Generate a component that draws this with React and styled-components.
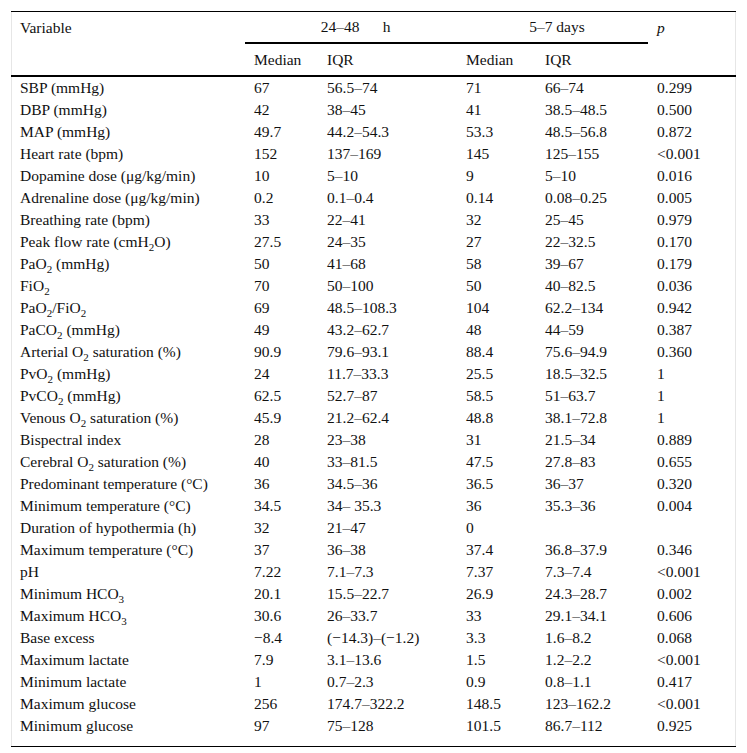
import React from 'react';
import styled, { createGlobalStyle } from 'styled-components';

const GlobalStyle = createGlobalStyle`
  html, body {
    margin: 0;
    padding: 0;
    background: #fff;
  }
`;

// "PaO_2" -> PaO<sub>2</sub>
const sub = (text) =>
  text.split(/(_\d)/).map((p, i) =>
    p.startsWith('_') ? <Sub key={i}>{p.slice(1)}</Sub> : <React.Fragment key={i}>{p}</React.Fragment>
  );

const rows = [
  ['SBP (mmHg)', '67', '56.5–74', '71', '66–74', '0.299'],
  ['DBP (mmHg)', '42', '38–45', '41', '38.5–48.5', '0.500'],
  ['MAP (mmHg)', '49.7', '44.2–54.3', '53.3', '48.5–56.8', '0.872'],
  ['Heart rate (bpm)', '152', '137–169', '145', '125–155', '<0.001'],
  ['Dopamine dose (μg/kg/min)', '10', '5–10', '9', '5–10', '0.016'],
  ['Adrenaline dose (μg/kg/min)', '0.2', '0.1–0.4', '0.14', '0.08–0.25', '0.005'],
  ['Breathing rate (bpm)', '33', '22–41', '32', '25–45', '0.979'],
  ['Peak flow rate (cmH_2O)', '27.5', '24–35', '27', '22–32.5', '0.170'],
  ['PaO_2 (mmHg)', '50', '41–68', '58', '39–67', '0.179'],
  ['FiO_2', '70', '50–100', '50', '40–82.5', '0.036'],
  ['PaO_2/FiO_2', '69', '48.5–108.3', '104', '62.2–134', '0.942'],
  ['PaCO_2 (mmHg)', '49', '43.2–62.7', '48', '44–59', '0.387'],
  ['Arterial O_2 saturation (%)', '90.9', '79.6–93.1', '88.4', '75.6–94.9', '0.360'],
  ['PvO_2 (mmHg)', '24', '11.7–33.3', '25.5', '18.5–32.5', '1'],
  ['PvCO_2 (mmHg)', '62.5', '52.7–87', '58.5', '51–63.7', '1'],
  ['Venous O_2 saturation (%)', '45.9', '21.2–62.4', '48.8', '38.1–72.8', '1'],
  ['Bispectral index', '28', '23–38', '31', '21.5–34', '0.889'],
  ['Cerebral O_2 saturation (%)', '40', '33–81.5', '47.5', '27.8–83', '0.655'],
  ['Predominant temperature (°C)', '36', '34.5–36', '36.5', '36–37', '0.320'],
  ['Minimum temperature (°C)', '34.5', '34– 35.3', '36', '35.3–36', '0.004'],
  ['Duration of hypothermia (h)', '32', '21–47', '0', '', ''],
  ['Maximum temperature (°C)', '37', '36–38', '37.4', '36.8–37.9', '0.346'],
  ['pH', '7.22', '7.1–7.3', '7.37', '7.3–7.4', '<0.001'],
  ['Minimum HCO_3', '20.1', '15.5–22.7', '26.9', '24.3–28.7', '0.002'],
  ['Maximum HCO_3', '30.6', '26–33.7', '33', '29.1–34.1', '0.606'],
  ['Base excess', '−8.4', '(−14.3)–(−1.2)', '3.3', '1.6–8.2', '0.068'],
  ['Maximum lactate', '7.9', '3.1–13.6', '1.5', '1.2–2.2', '<0.001'],
  ['Minimum lactate', '1', '0.7–2.3', '0.9', '0.8–1.1', '0.417'],
  ['Maximum glucose', '256', '174.7–322.2', '148.5', '123–162.2', '<0.001'],
  ['Minimum glucose', '97', '75–128', '101.5', '86.7–112', '0.925'],
];

export default function App() {
  return (
    <Page>
      <GlobalStyle />
      <Frame>
        <Table>
          <colgroup>
            <col style={{ width: 234 }} />
            <col style={{ width: 73 }} />
            <col style={{ width: 139 }} />
            <col style={{ width: 79 }} />
            <col style={{ width: 112 }} />
            <col style={{ width: 88 }} />
          </colgroup>
          <thead>
            <tr>
              <HeadCell>Variable</HeadCell>
              <SpanCell colSpan={2}>24–48&nbsp;&nbsp;&nbsp;&nbsp;&nbsp;&nbsp;h</SpanCell>
              <SpanCell colSpan={2}>5–7 days</SpanCell>
              <HeadCell>
                <Italic>p</Italic>
              </HeadCell>
            </tr>
            <SubHeadRow>
              <HeadCell />
              <HeadCell>Median</HeadCell>
              <HeadCell>IQR</HeadCell>
              <HeadCell>Median</HeadCell>
              <HeadCell>IQR</HeadCell>
              <HeadCell />
            </SubHeadRow>
          </thead>
          <tbody>
            {rows.map((r, i) => (
              <Row key={i} $last={i === rows.length - 1}>
                {r.map((c, j) => (
                  <Cell key={j}>{j === 0 ? sub(c) : c}</Cell>
                ))}
              </Row>
            ))}
          </tbody>
        </Table>
      </Frame>
    </Page>
  );
}

const Page = styled.div`
  padding: 11px;
  width: 725px;
  font-family: 'Liberation Serif', 'Times New Roman', serif;
  font-size: 15.5px;
  color: #111;
`;

const Frame = styled.div`
  border-left: 1px solid #e6e6e6;
  border-right: 1px solid #e6e6e6;
`;

const Table = styled.table`
  border-collapse: collapse;
  table-layout: fixed;
  border-top: 1px solid #000;
  border-bottom: 1px solid #000;
  margin-left: -1px;
  width: calc(100% + 2px);
`;

const HeadCell = styled.th`
  font-weight: normal;
  text-align: left;
  padding: 0 0 0 9px;
  height: 30px;
  vertical-align: middle;
  white-space: nowrap;
`;

const SpanCell = styled(HeadCell)`
  text-align: center;
  border-bottom: 2px solid #000;
`;

const SubHeadRow = styled.tr`
  border-bottom: 2px solid #000;
  th {
    height: 31px;
  }
`;

const Italic = styled.i`
  font-style: italic;
`;

const Row = styled.tr`
  td {
    height: ${(p) => (p.$last ? '28px' : '22px')};
    vertical-align: ${(p) => (p.$last ? 'top' : 'middle')};
    padding-top: ${(p) => (p.$last ? '3px' : '0')};
  }
`;

const Cell = styled.td`
  padding: 0 0 0 9px;
  white-space: nowrap;
  line-height: 16px;
`;

const Sub = styled.sub`
  font-size: 11px;
  line-height: 0;
  vertical-align: -4px;
`;
